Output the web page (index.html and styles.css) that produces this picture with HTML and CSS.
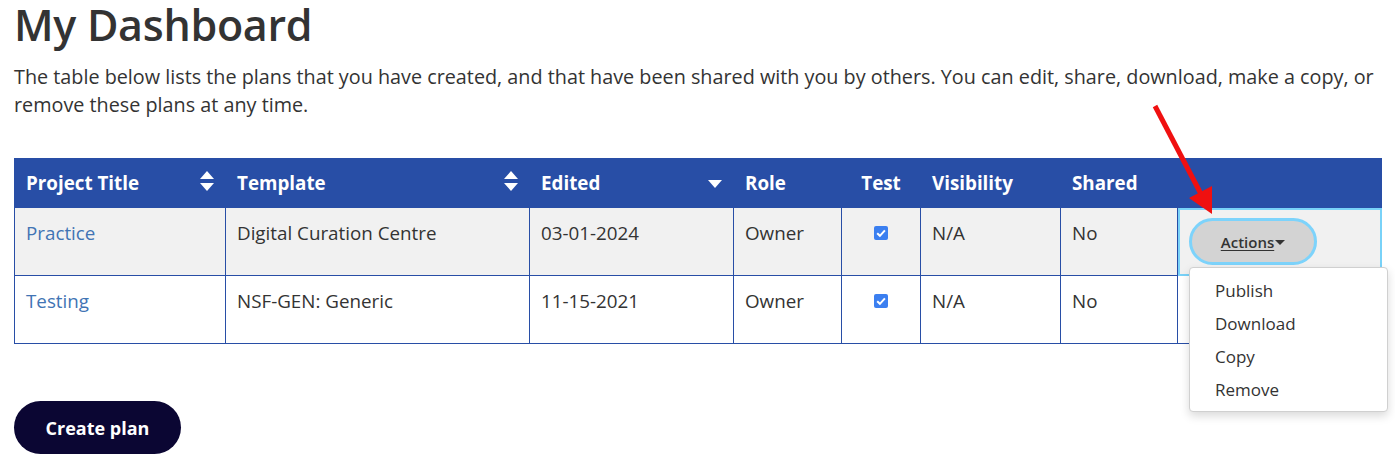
FILE: index.html
```html
<!DOCTYPE html>
<html lang="en">
<head>
<meta charset="utf-8">
<title>My Dashboard</title>
<link rel="stylesheet" href="styles.css">
</head>
<body>
<main class="page">
  <h1 class="title">My Dashboard</h1>
  <p class="intro">The table below lists the plans that you have created, and that have been shared with you by others. You can edit, share, download, make a copy, or remove these plans at any time.</p>

  <table class="plans">
    <colgroup>
      <col class="c-title"><col class="c-template"><col class="c-edited"><col class="c-role"><col class="c-test"><col class="c-vis"><col class="c-shared"><col class="c-actions">
    </colgroup>
    <thead>
      <tr>
        <th><div class="th-inner"><span>Project Title</span>
          <svg class="sort" viewBox="0 0 14 20" width="14" height="20"><path d="M0 8 L7 0 L14 8 Z M0 12 L14 12 L7 20 Z" fill="#fff"/></svg></div></th>
        <th><div class="th-inner"><span>Template</span>
          <svg class="sort" viewBox="0 0 14 20" width="14" height="20"><path d="M0 8 L7 0 L14 8 Z M0 12 L14 12 L7 20 Z" fill="#fff"/></svg></div></th>
        <th><div class="th-inner"><span>Edited</span>
          <svg class="sort sort-down" viewBox="0 0 14 8" width="14" height="8"><path d="M0 0 L14 0 L7 8 Z" fill="#fff"/></svg></div></th>
        <th>Role</th>
        <th class="center">Test</th>
        <th>Visibility</th>
        <th>Shared</th>
        <th></th>
      </tr>
    </thead>
    <tbody>
      <tr class="odd">
        <td><a class="link" href="#">Practice</a></td>
        <td>Digital Curation Centre</td>
        <td>03-01-2024</td>
        <td>Owner</td>
        <td class="center"><svg class="check" viewBox="0 0 14 14" width="14" height="14"><rect width="14" height="14" rx="2" fill="#3b7ff0"/><path d="M3.2 7.2 L5.9 9.8 L10.9 4.3" fill="none" stroke="#fff" stroke-width="2"/></svg></td>
        <td>N/A</td>
        <td>No</td>
        <td class="actions focused">
          <div class="menu-wrap">
            <button class="actions-btn" type="button"><span class="btn-label">Actions</span><span class="caret"></span></button>
            <ul class="dropdown">
              <li>Publish</li>
              <li>Download</li>
              <li>Copy</li>
              <li>Remove</li>
            </ul>
          </div>
        </td>
      </tr>
      <tr>
        <td><a class="link" href="#">Testing</a></td>
        <td>NSF-GEN: Generic</td>
        <td>11-15-2021</td>
        <td>Owner</td>
        <td class="center"><svg class="check" viewBox="0 0 14 14" width="14" height="14"><rect width="14" height="14" rx="2" fill="#3b7ff0"/><path d="M3.2 7.2 L5.9 9.8 L10.9 4.3" fill="none" stroke="#fff" stroke-width="2"/></svg></td>
        <td>N/A</td>
        <td>No</td>
        <td class="actions">
          <button class="actions-btn dark" type="button" aria-label="Actions"></button>
        </td>
      </tr>
    </tbody>
  </table>

  <button class="create" type="button">Create plan</button>
</main>

<svg class="annotation" width="1395" height="467" viewBox="0 0 1395 467">
  <line x1="1155" y1="106" x2="1201" y2="194" stroke="#f01010" stroke-width="5" stroke-linecap="butt"/>
  <polygon points="1189,198 1212,186 1212,214" fill="#f01010"/>
</svg>
</body>
</html>
```

FILE: styles.css
```css
html, body {
  margin: 0;
  padding: 0;
  background: #fff;
}

body {
  font-family: "Open Sans", "Noto Sans", "Liberation Sans", sans-serif;
  color: #333;
  position: relative;
}

.page {
  padding: 0 14px;
}

.title {
  margin: 0;
  font-size: 43px;
  line-height: 50px;
  font-weight: 600;
  color: #333;
  letter-spacing: -0.3px;
}

.intro {
  margin: 13px 0 0;
  font-size: 19.8px;
  line-height: 28px;
  color: #333;
}

.plans {
  margin-top: 39px;
  width: 1367px;
  border-collapse: collapse;
  table-layout: fixed;
  font-size: 18.8px;
}

.c-title { width: 211px; }
.c-template { width: 304px; }
.c-edited { width: 204px; }
.c-role { width: 108px; }
.c-test { width: 79px; }
.c-vis { width: 140px; }
.c-shared { width: 117px; }
.c-actions { width: 204px; }

.plans thead tr {
  background: #284ea6;
  height: 49px;
}

.plans th {
  color: #fff;
  font-weight: 700;
  text-align: left;
  padding: 0 11px;
  border: 1px solid #284ea6;
  vertical-align: middle;
}

.th-inner {
  display: flex;
  align-items: center;
  justify-content: space-between;
}

.sort {
  display: block;
  margin-top: -4px;
}

.sort-down {
  margin-top: 2px;
}

.plans td {
  border: 1px solid #284ea6;
  padding: 13px 11px 0;
  height: 68px;
  box-sizing: border-box;
  vertical-align: top;
  line-height: 24px;
  color: #333;
}

.plans tbody tr.odd {
  background: #f1f1f1;
}

.center {
  text-align: center !important;
}

.check {
  display: inline-block;
  margin-top: 4px;
}

.link {
  color: #4174b4;
  text-decoration: none;
}

.plans td.actions {
  padding: 10px 11px 0;
  position: relative;
}

.plans td.focused {
  outline: 2px solid #79d2f8;
  outline-offset: -2px;
}

.menu-wrap {
  position: relative;
  display: inline-block;
}

.actions-btn {
  width: 128px;
  height: 47px;
  border-radius: 24px;
  border: 3px solid #7dd3fb;
  background: #d3d3d3;
  font-family: inherit;
  font-size: 15px;
  font-weight: 600;
  color: #333;
  display: flex;
  align-items: center;
  justify-content: center;
  padding: 0;
  cursor: pointer;
}

.actions-btn.dark {
  background: #0b0633;
  border-color: #0b0633;
}

.btn-label {
  text-decoration: underline;
  text-underline-offset: 2px;
}

.caret {
  width: 0;
  height: 0;
  border-left: 5px solid transparent;
  border-right: 5px solid transparent;
  border-top: 5px solid #333;
  margin-left: 1px;
  margin-top: 2px;
}

.dropdown {
  position: absolute;
  left: 0;
  top: calc(100% + 2px);
  z-index: 5;
  width: 199px;
  box-sizing: border-box;
  margin: 0;
  padding: 6px 0 5px;
  list-style: none;
  background: #fff;
  border: 1px solid #d0d0d0;
  border-radius: 4px;
  box-shadow: 0 4px 10px rgba(0, 0, 0, 0.15);
}

.dropdown li {
  padding: 0 25px;
  height: 33px;
  line-height: 33px;
  font-size: 17px;
  color: #333;
}

.create {
  margin-top: 57px;
  width: 167px;
  height: 53px;
  border: none;
  border-radius: 27px;
  background: #0b0633;
  color: #fff;
  font-family: inherit;
  font-size: 18px;
  font-weight: 700;
  cursor: pointer;
}

.annotation {
  position: absolute;
  left: 0;
  top: 0;
  pointer-events: none;
  z-index: 10;
}
```
